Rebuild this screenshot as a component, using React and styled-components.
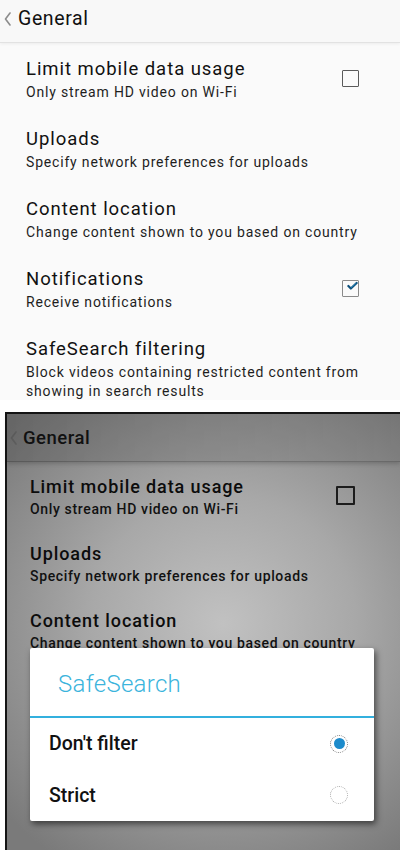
import styled, { createGlobalStyle } from 'styled-components';

const GlobalStyle = createGlobalStyle`
  html, body {
    margin: 0;
    padding: 0;
    background: #ffffff;
  }
  body {
    font-family: Roboto, "Noto Sans", "Liberation Sans", sans-serif;
  }
`;

const Page = styled.div`
  width: 400px;
  height: 850px;
  display: flex;
  flex-direction: column;
  overflow: hidden;
  background: #ffffff;
`;

const LightShot = styled.section`
  height: 400px;
  background: #fafafa;
  display: flex;
  flex-direction: column;
`;

const DimShot = styled.section`
  position: relative;
  flex: 1;
  margin: 12px 0 0 5px;
  border-top: 2px solid #151515;
  border-left: 2px solid #151515;
  background: radial-gradient(
    ellipse 75% 65% at 55% 48%,
    #c1c1c1 0%,
    #a8a8a8 45%,
    #7a7a7a 100%
  );
  display: flex;
  flex-direction: column;
`;

const Header = styled.header`
  display: flex;
  align-items: center;
  gap: ${(p) => (p.$dim ? '6px' : '7px')};
  height: ${(p) => (p.$dim ? '48px' : '43px')};
  padding: ${(p) => (p.$dim ? '0 0 0 3px' : '0 0 4px 4px')};
  box-sizing: border-box;
  border-bottom: 1px solid ${(p) => (p.$dim ? 'rgba(0,0,0,0.18)' : '#e2e2e2')};
  background: ${(p) =>
    p.$dim
      ? 'linear-gradient(to right, rgba(0,0,0,0.16), rgba(0,0,0,0.07))'
      : '#f8f8f8'};
  box-shadow: ${(p) =>
    p.$dim ? '0 2px 4px rgba(0,0,0,0.18)' : '0 1px 3px rgba(0,0,0,0.06)'};
`;

const HeaderTitle = styled.h1`
  margin: 0;
  font-size: ${(p) => (p.$dim ? '18.5px' : '19.5px')};
  letter-spacing: ${(p) => (p.$dim ? '0.5px' : '0.6px')};
  font-weight: ${(p) => (p.$dim ? 500 : 400)};
  line-height: 22px;
  color: #111111;
`;

const List = styled.div`
  display: flex;
  flex-direction: column;
  gap: ${(p) => (p.$dim ? '25px' : '26.5px')};
  padding: ${(p) => (p.$dim ? '13.5px 45px 0 23px' : '15px 41px 0 26px')};
`;

const Row = styled.div`
  display: flex;
  align-items: center;
  justify-content: space-between;
`;

const TextBlock = styled.div`
  display: flex;
  flex-direction: column;
`;

const Title = styled.div`
  font-size: ${(p) => (p.$dim ? '18px' : '18.5px')};
  letter-spacing: ${(p) => (p.$dim ? '0.9px' : '0.95px')};
  line-height: ${(p) => (p.$dim ? '21px' : '22px')};
  font-weight: ${(p) => (p.$dim ? 500 : 400)};
  color: ${(p) => (p.$dim ? '#0c0c0c' : '#111111')};
`;

const Subtitle = styled.div`
  margin-top: ${(p) => (p.$dim ? '4px' : '3px')};
  font-size: 14px;
  letter-spacing: ${(p) => (p.$dim ? '0.65px' : '0.82px')};
  line-height: ${(p) => (p.$dim ? '17px' : '18.5px')};
  font-weight: ${(p) => (p.$dim ? 500 : 400)};
  color: ${(p) => (p.$dim ? '#111111' : '#1e1e1e')};
  white-space: nowrap;
`;

const Box = styled.span`
  display: inline-flex;
  align-items: center;
  justify-content: center;
  flex-shrink: 0;
  width: ${(p) => (p.$dim ? '19px' : '17px')};
  height: ${(p) => (p.$dim ? '19px' : '17px')};
  margin-bottom: 3px;
  box-sizing: border-box;
  border: ${(p) =>
    p.$dim ? '2px solid #1c1c1c' : `1.5px solid ${p.$checked ? '#8a8a8a' : '#5a5a5a'}`};
  border-radius: 1px;
  overflow: visible;
`;

const Dialog = styled.div`
  position: absolute;
  left: 23px;
  top: 234px;
  width: 344px;
  height: 173px;
  background: #ffffff;
  border-radius: 2px;
  box-shadow: 2px 3px 6px rgba(0, 0, 0, 0.55);
  display: flex;
  flex-direction: column;
`;

const DialogTitle = styled.h2`
  margin: 0;
  padding: 22px 0 18px 28px;
  font-size: 24px;
  letter-spacing: 0.3px;
  line-height: 28px;
  font-weight: 300;
  color: #3bb4dc;
`;

const Divider = styled.div`
  height: 2px;
  background: #33b0de;
`;

const Option = styled.div`
  flex: 1;
  display: flex;
  align-items: center;
  justify-content: space-between;
  padding: 0 26px 0 19px;
  font-size: 19.5px;
  font-weight: 500;
  color: #111111;
`;

const Radio = styled.span`
  display: inline-flex;
  align-items: center;
  justify-content: center;
  width: 18px;
  height: 18px;
  box-sizing: border-box;
  border-radius: 50%;
  border: 1.3px dotted ${(p) => (p.$on ? '#7a7a7a' : '#a8a8a8')};
`;

const RadioDot = styled.span`
  width: 11px;
  height: 11px;
  border-radius: 50%;
  background: #1d8bcb;
`;

function Back({ dim }) {
  return (
    <svg width="7" height="14" viewBox="0 0 7 14" style={{ opacity: dim ? 0.25 : 1 }}>
      <polyline
        points="6,1 1.5,7 6,13"
        fill="none"
        stroke={dim ? '#333' : '#8c8c8c'}
        strokeWidth="1.6"
        strokeLinecap="round"
        strokeLinejoin="round"
      />
    </svg>
  );
}

function Check({ dim, checked }) {
  return (
    <Box $dim={dim} $checked={checked}>
      {checked && (
        <svg width="20" height="16" viewBox="0 0 20 16" style={{ marginLeft: 4, marginTop: -4 }}>
          <polyline
            points="2.5,8 7,12.5 17.5,2.5"
            fill="none"
            stroke="#0d4f7a"
            strokeWidth="4"
            strokeLinecap="round"
            strokeLinejoin="round"
          />
          <polyline
            points="7.5,11 16.5,3"
            fill="none"
            stroke="#2a9ad4"
            strokeWidth="1.2"
            strokeLinecap="round"
          />
        </svg>
      )}
    </Box>
  );
}

function Setting({ dim, title, subtitle, control }) {
  return (
    <Row>
      <TextBlock>
        <Title $dim={dim}>{title}</Title>
        <Subtitle $dim={dim}>{subtitle}</Subtitle>
      </TextBlock>
      {control}
    </Row>
  );
}

function SettingsList({ dim, items }) {
  return (
    <List $dim={dim}>
      {items.map((it) => (
        <Setting
          key={it.title}
          dim={dim}
          title={it.title}
          subtitle={it.subtitle}
          control={it.box ? <Check dim={dim} checked={it.checked} /> : null}
        />
      ))}
    </List>
  );
}

const lightItems = [
  { title: 'Limit mobile data usage', subtitle: 'Only stream HD video on Wi-Fi', box: true },
  { title: 'Uploads', subtitle: 'Specify network preferences for uploads' },
  { title: 'Content location', subtitle: 'Change content shown to you based on country' },
  { title: 'Notifications', subtitle: 'Receive notifications', box: true, checked: true },
  {
    title: 'SafeSearch filtering',
    subtitle: (
      <>
        Block videos containing restricted content from
        <br />
        showing in search results
      </>
    ),
  },
];

const dimItems = lightItems.slice(0, 3);

export default function App() {
  return (
    <>
      <GlobalStyle />
      <Page>
        <LightShot>
          <Header>
            <Back />
            <HeaderTitle>General</HeaderTitle>
          </Header>
          <SettingsList items={lightItems} />
        </LightShot>

        <DimShot>
          <Header $dim>
            <Back dim />
            <HeaderTitle $dim>General</HeaderTitle>
          </Header>
          <SettingsList dim items={dimItems} />

          <Dialog>
            <DialogTitle>SafeSearch</DialogTitle>
            <Divider />
            <Option>
              Don't filter
              <Radio $on>
                <RadioDot />
              </Radio>
            </Option>
            <Option>
              Strict
              <Radio />
            </Option>
          </Dialog>
        </DimShot>
      </Page>
    </>
  );
}
